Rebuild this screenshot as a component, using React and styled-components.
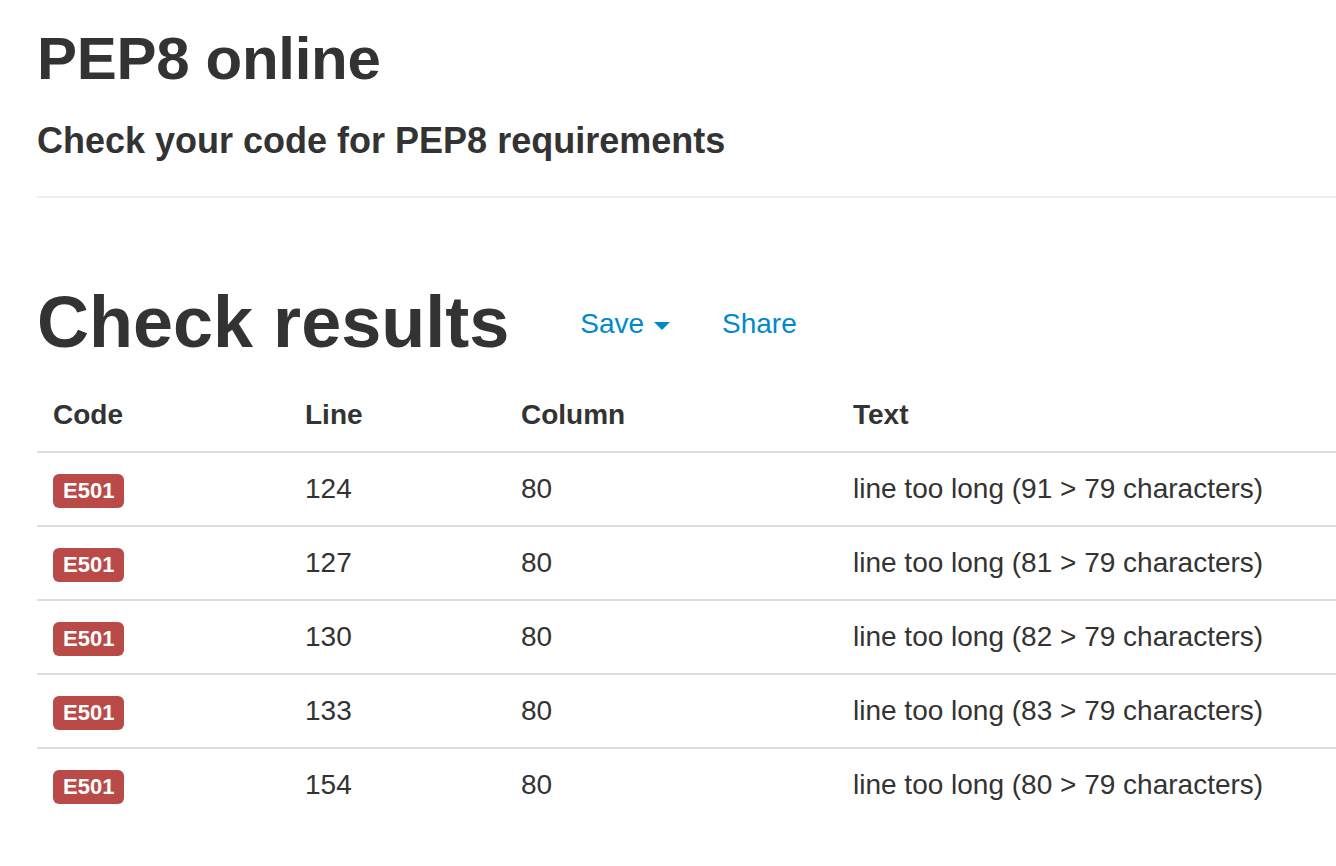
import React from 'react';
import styled, {createGlobalStyle} from 'styled-components';

const GlobalStyle = createGlobalStyle`
    html, body {
        margin: 0;
        padding: 0;
        background: #fff;
        overflow: hidden;
    }
    body {
        font-family: "Liberation Sans", Arial, Helvetica, sans-serif;
        font-size: 28px;
        line-height: 40px;
        color: #333;
    }
`;

const Page = styled.div`
    padding: 0 0 0 37px;
`;

const Title = styled.h1`
    margin: 27px 0 0;
    font-size: 60px;
    line-height: 64px;
    font-weight: bold;
    letter-spacing: -0.3px;
`;

const Subtitle = styled.h4`
    margin: 28px 0 0;
    font-size: 36px;
    line-height: 44px;
    font-weight: bold;
`;

const Divider = styled.hr`
    margin: 33px 0 0;
    height: 0;
    border: 0;
    border-top: 2px solid #eee;
`;

const ResultsBar = styled.div`
    display: flex;
    align-items: flex-start;
    margin-top: 84px;
`;

const ResultsTitle = styled.h1`
    margin: 0;
    font-size: 72px;
    line-height: 80px;
    font-weight: bold;
`;

const Nav = styled.ul`
    display: flex;
    list-style: none;
    margin: 0 0 0 45px;
    padding: 22px 0 0;
`;

const NavLink = styled.a`
    display: block;
    padding: 0 26px;
    font-size: 28px;
    line-height: 40px;
    color: #0088cc;
    text-decoration: none;
    cursor: pointer;
`;

const Caret = styled.span`
    display: inline-block;
    width: 0;
    height: 0;
    margin-left: 10px;
    vertical-align: middle;
    border-left: 8px solid transparent;
    border-right: 8px solid transparent;
    border-top: 8px solid #0088cc;
`;

const Table = styled.table`
    margin-top: 17px;
    width: 100%;
    table-layout: fixed;
    border-collapse: separate;
    border-spacing: 0;
`;

const HeadCell = styled.th`
    box-sizing: border-box;
    width: ${props => props.$width || 'auto'};
    padding: 16px;
    line-height: 40px;
    text-align: left;
    vertical-align: bottom;
    font-weight: bold;
    white-space: nowrap;
`;

const Cell = styled.td`
    box-sizing: border-box;
    padding: 16px;
    line-height: 40px;
    text-align: left;
    vertical-align: top;
    border-top: 2px solid #ddd;
    white-space: nowrap;
`;

const Badge = styled.span`
    display: inline-block;
    padding: 3px 10px;
    font-size: 22px;
    line-height: 28px;
    font-weight: bold;
    color: #fff;
    background-color: #b94a48;
    border-radius: 6px;
    vertical-align: baseline;
`;

const results = [
    {code: 'E501', line: 124, column: 80, text: 'line too long (91 > 79 characters)'},
    {code: 'E501', line: 127, column: 80, text: 'line too long (81 > 79 characters)'},
    {code: 'E501', line: 130, column: 80, text: 'line too long (82 > 79 characters)'},
    {code: 'E501', line: 133, column: 80, text: 'line too long (83 > 79 characters)'},
    {code: 'E501', line: 154, column: 80, text: 'line too long (80 > 79 characters)'},
];

const App = () => {
    return <Page>
        <GlobalStyle />
        <Title>PEP8 online</Title>
        <Subtitle>Check your code for PEP8 requirements</Subtitle>
        <Divider />
        <ResultsBar>
            <ResultsTitle>Check results</ResultsTitle>
            <Nav>
                <li><NavLink>Save<Caret /></NavLink></li>
                <li><NavLink>Share</NavLink></li>
            </Nav>
        </ResultsBar>
        <Table>
            <thead>
                <tr>
                    <HeadCell $width="252px">Code</HeadCell>
                    <HeadCell $width="216px">Line</HeadCell>
                    <HeadCell $width="332px">Column</HeadCell>
                    <HeadCell>Text</HeadCell>
                </tr>
            </thead>
            <tbody>
                {results.map((r, i) =>
                    <tr key={i}>
                        <Cell><Badge>{r.code}</Badge></Cell>
                        <Cell>{r.line}</Cell>
                        <Cell>{r.column}</Cell>
                        <Cell>{r.text}</Cell>
                    </tr>
                )}
            </tbody>
        </Table>
    </Page>
}

export default App;
